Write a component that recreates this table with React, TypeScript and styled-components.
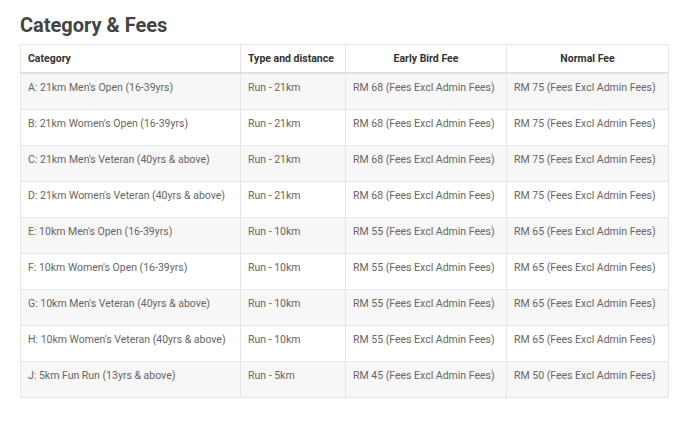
import React from "react";
import styled, { createGlobalStyle } from "styled-components";

const Global = createGlobalStyle`
  html, body { margin: 0; padding: 0; background: #fff; }
  body { font-family: Roboto, "Liberation Sans", Arial, sans-serif; }
`;

const Page = styled.div`
  padding: 13px 28px 0 20px;
  width: 696px;
  box-sizing: border-box;
`;

const Title = styled.h2`
  margin: 0 0 7px;
  font-size: 20px;
  line-height: 24px;
  font-weight: 700;
  color: #444;
`;

const Table = styled.table`
  width: 648px;
  border-collapse: collapse;
  table-layout: fixed;
  border: 1px solid #e6e6e6;
`;

const HeadCell = styled.th<{ $center?: boolean }>`
  font-size: 10.5px;
  line-height: 15px;
  font-weight: 700;
  color: #333;
  text-align: ${(p) => (p.$center ? "center" : "left")};
  padding: 6px 7px;
  border: 1px solid #e6e6e6;
  border-bottom: 2px solid #e0e0e0;
  white-space: nowrap;
`;

const Row = styled.tr<{ $striped: boolean }>`
  background: ${(p) => (p.$striped ? "#f7f7f7" : "#fff")};
`;

const Cell = styled.td`
  font-size: 10.5px;
  line-height: 15px;
  font-weight: 400;
  color: #666;
  text-align: left;
  vertical-align: top;
  padding: 6px 7px 14px;
  border: 1px solid #e6e6e6;
  white-space: nowrap;
`;

const rows = [
  ["A: 21km Men's Open (16-39yrs)", "Run - 21km", "RM 68 (Fees Excl Admin Fees)", "RM 75 (Fees Excl Admin Fees)"],
  ["B: 21km Women's Open (16-39yrs)", "Run - 21km", "RM 68 (Fees Excl Admin Fees)", "RM 75 (Fees Excl Admin Fees)"],
  ["C: 21km Men's Veteran (40yrs & above)", "Run - 21km", "RM 68 (Fees Excl Admin Fees)", "RM 75 (Fees Excl Admin Fees)"],
  ["D: 21km Women's Veteran (40yrs & above)", "Run - 21km", "RM 68 (Fees Excl Admin Fees)", "RM 75 (Fees Excl Admin Fees)"],
  ["E: 10km Men's Open (16-39yrs)", "Run - 10km", "RM 55 (Fees Excl Admin Fees)", "RM 65 (Fees Excl Admin Fees)"],
  ["F: 10km Women's Open (16-39yrs)", "Run - 10km", "RM 55 (Fees Excl Admin Fees)", "RM 65 (Fees Excl Admin Fees)"],
  ["G: 10km Men's Veteran (40yrs & above)", "Run - 10km", "RM 55 (Fees Excl Admin Fees)", "RM 65 (Fees Excl Admin Fees)"],
  ["H: 10km Women's Veteran (40yrs & above)", "Run - 10km", "RM 55 (Fees Excl Admin Fees)", "RM 65 (Fees Excl Admin Fees)"],
  ["J: 5km Fun Run (13yrs & above)", "Run - 5km", "RM 45 (Fees Excl Admin Fees)", "RM 50 (Fees Excl Admin Fees)"],
];

export default function App() {
  return (
    <Page>
      <Global />
      <Title>Category &amp; Fees</Title>
      <Table>
        <colgroup>
          <col style={{ width: 220 }} />
          <col style={{ width: 105 }} />
          <col style={{ width: 161 }} />
          <col style={{ width: 162 }} />
        </colgroup>
        <thead>
          <tr>
            <HeadCell>Category</HeadCell>
            <HeadCell>Type and distance</HeadCell>
            <HeadCell $center>Early Bird Fee</HeadCell>
            <HeadCell $center>Normal Fee</HeadCell>
          </tr>
        </thead>
        <tbody>
          {rows.map((r, i) => (
            <Row key={i} $striped={i % 2 === 0}>
              {r.map((c, j) => (
                <Cell key={j}>{c}</Cell>
              ))}
            </Row>
          ))}
        </tbody>
      </Table>
    </Page>
  );
}
